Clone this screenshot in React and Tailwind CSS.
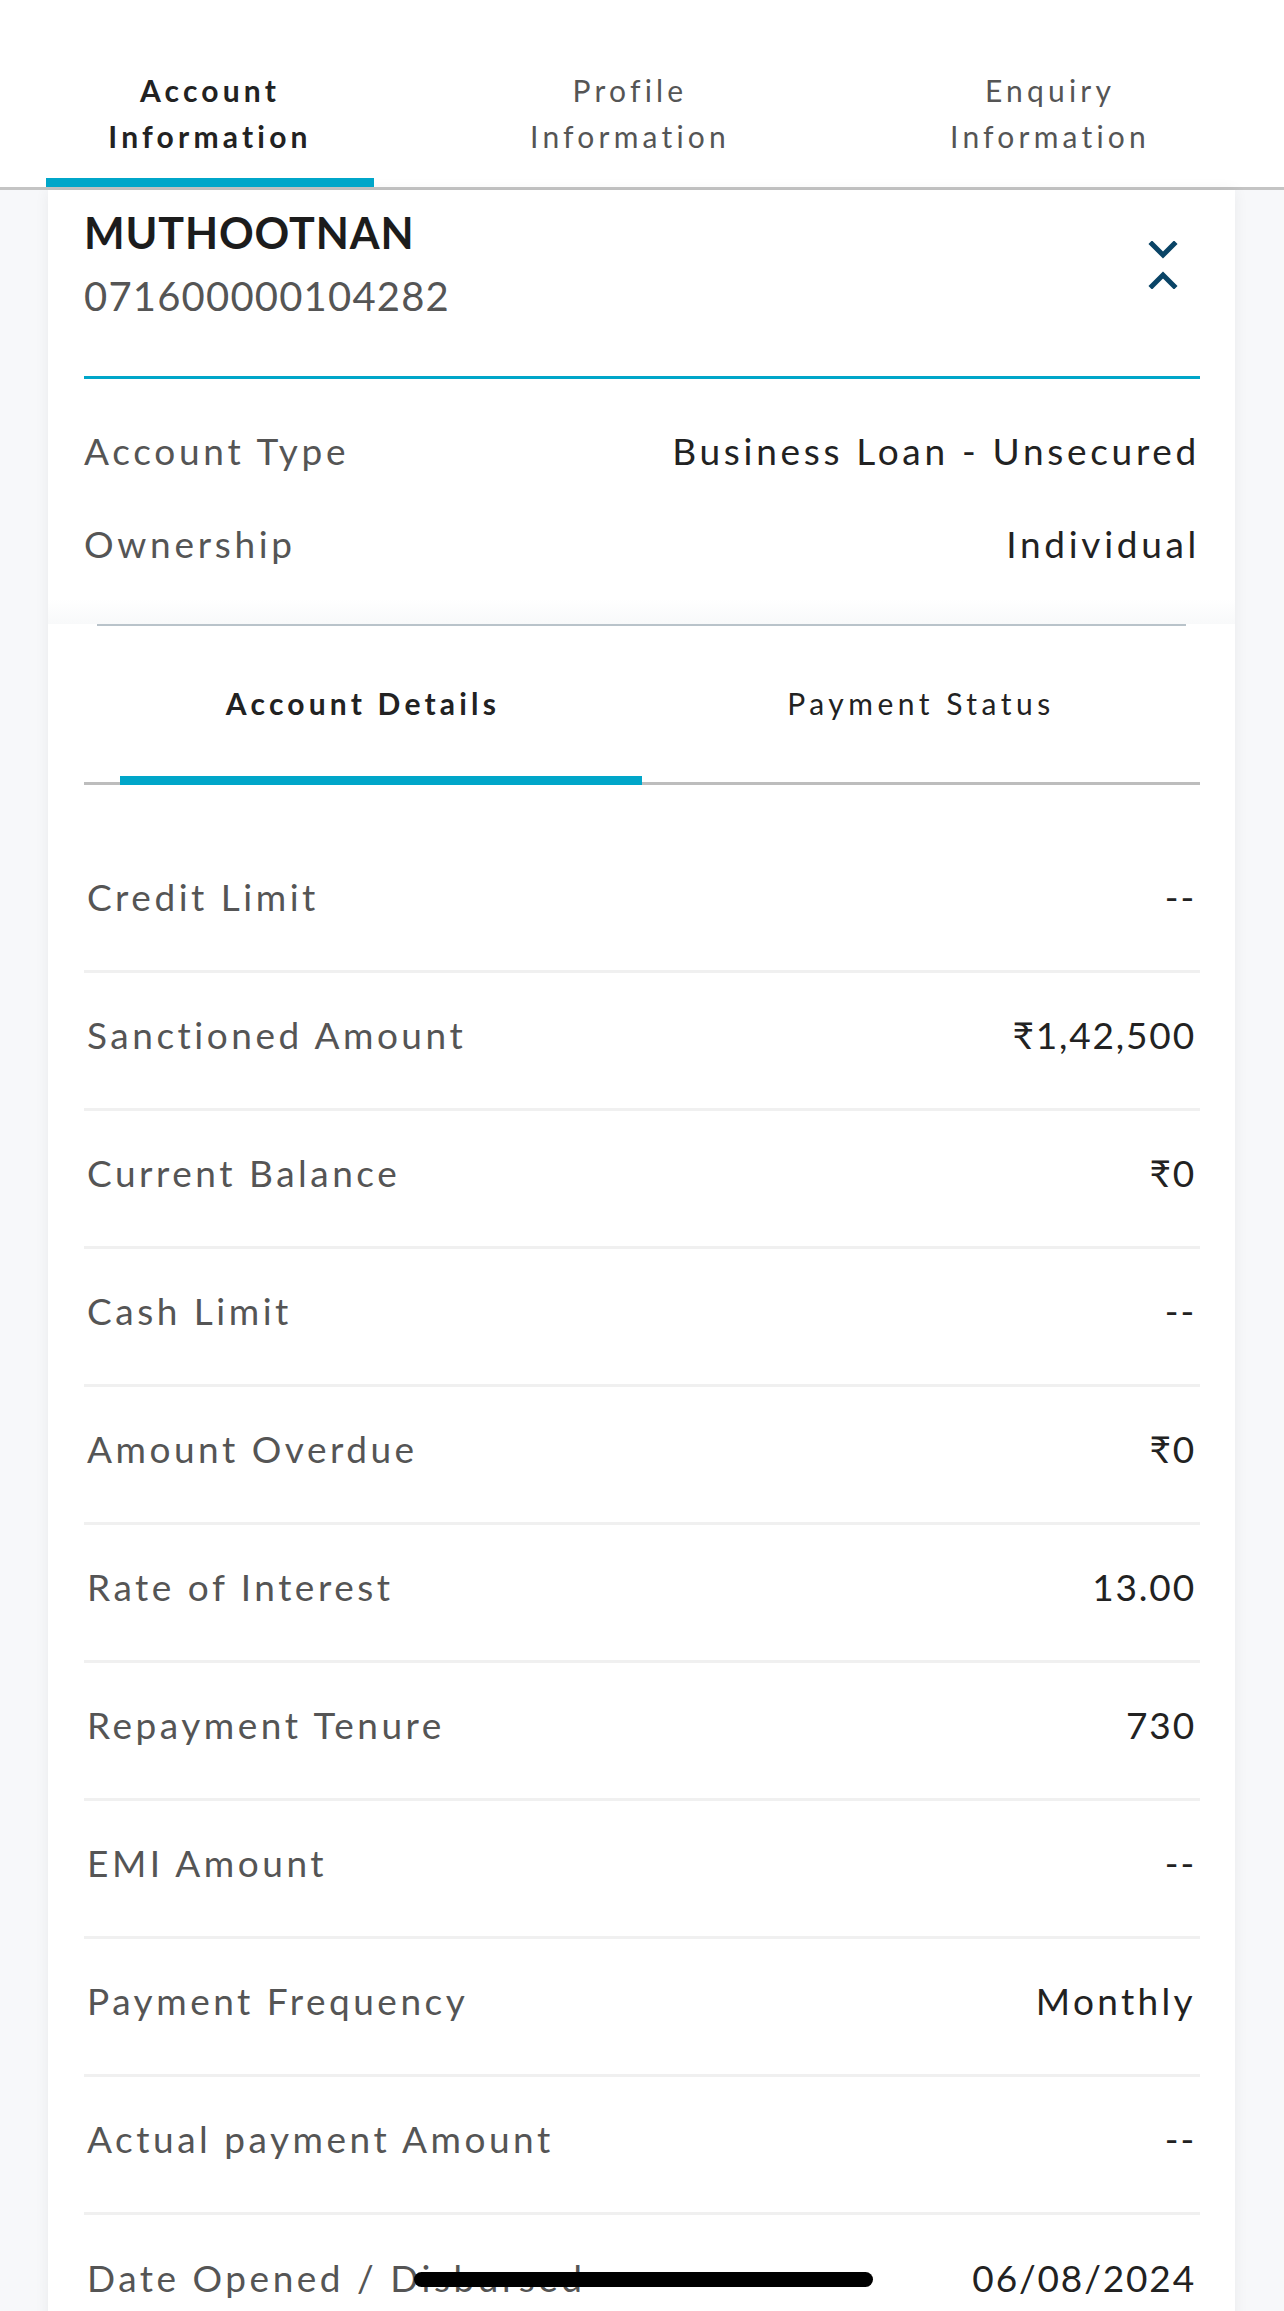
import React from 'react';

const rows = [
  ['Credit Limit', '--'],
  ['Sanctioned Amount', '₹1,42,500'],
  ['Current Balance', '₹0'],
  ['Cash Limit', '--'],
  ['Amount Overdue', '₹0'],
  ['Rate of Interest', '13.00'],
  ['Repayment Tenure', '730'],
  ['EMI Amount', '--'],
  ['Payment Frequency', 'Monthly'],
  ['Actual payment Amount', '--'],
  ['Date Opened / Disbursed', '06/08/2024'],
];

function Chevron({ up }) {
  return (
    <svg width="30" height="18" viewBox="0 0 30 18" fill="none">
      <path
        d={up ? 'M4 15 L15 4 L26 15' : 'M4 3 L15 14 L26 3'}
        stroke="#0a4466"
        strokeWidth="5"
        strokeLinecap="square"
      />
    </svg>
  );
}

function TopTab({ line1, active }) {
  return (
    <div className="w-[420px] flex flex-col items-center pt-[67px]">
      <div
        className={`text-center text-[30px] leading-[46px] tracking-[0.14em] ${
          active ? 'font-bold text-[#222]' : 'text-[#555]'
        }`}
      >
        <div>{line1}</div>
        <div>Information</div>
      </div>
      <div className={`mt-[19px] h-[9px] w-[328px] ${active ? 'bg-[#00a6c9]' : ''}`} />
    </div>
  );
}

export default function App() {
  return (
    <div
      className="relative w-[1284px] h-[2311px] overflow-hidden bg-[#f7f8fa]"
      style={{ fontFamily: 'Lato, "Noto Sans", "DejaVu Sans", sans-serif' }}
    >
      {/* top tabs */}
      <div className="bg-white border-b-[3px] border-[#c4c4c4] flex">
        <TopTab line1="Account" active />
        <TopTab line1="Profile" />
        <TopTab line1="Enquiry" />
      </div>

      {/* card */}
      <div className="ml-[48px] w-[1187px] bg-white shadow-[0_0_14px_rgba(0,0,0,0.06)]">
        <div className="px-[35px] pl-[36px]">
          <div className="flex justify-between items-start pt-[18px]">
            <div>
              <div className="text-[43px] leading-[50px] font-bold text-[#1c1c1c] tracking-[0.02em]">
                MUTHOOTNAN
              </div>
              <div className="mt-[13px] text-[40px] leading-[50px] text-[#555] tracking-[0.03em]">
                071600000104282
              </div>
            </div>
            <div className="flex flex-col items-center gap-[12px] mt-[33px] mr-[22px]">
              <Chevron />
              <Chevron up />
            </div>
          </div>
          <div className="mt-[55px] h-[3px] bg-[#00a6c9]" />

          <div className="mt-[47px] flex justify-between text-[37px] leading-[50px] tracking-[0.1em]">
            <span className="text-[#555]">Account Type</span>
            <span className="text-[#222]">Business Loan - Unsecured</span>
          </div>
          <div className="mt-[43px] flex justify-between text-[37px] leading-[50px] tracking-[0.1em]">
            <span className="text-[#555]">Ownership</span>
            <span className="text-[#222]">Individual</span>
          </div>
        </div>
        <div className="mt-[30px] h-[25px] bg-gradient-to-b from-white to-[#f8f9fa]" />
        <div className="mx-[49px] h-[2px] bg-[#b9c3ca]" />

        {/* sub tabs */}
        <div className="px-[35px] pl-[36px]">
          <div className="flex border-b-[3px] border-[#bdbdbd] pt-[57px]">
            <div className="flex-1 flex flex-col">
              <div className="text-center text-[30px] leading-[40px] font-bold text-[#222] tracking-[0.14em]">
                Account Details
              </div>
              <div className="mt-[53px] ml-[36px] h-[9px] -mb-[3px] bg-[#00a6c9]" />
            </div>
            <div className="flex-1 flex flex-col">
              <div className="text-center text-[30px] leading-[40px] text-[#222] tracking-[0.15em]">
                Payment Status
              </div>
            </div>
          </div>

          <div className="pt-[50px]">
            {rows.map(([label, value], i) => (
              <div
                key={label}
                className={`h-[138px] pb-[12px] flex items-center justify-between text-[37px] ${
                  i < rows.length - 1 ? 'border-b-[3px] border-[#f0f0f0]' : ''
                }`}
              >
                <span className="ml-[3px] text-[#555] tracking-[0.095em]">{label}</span>
                <span
                  className={`mr-[4px] text-[#222] ${
                    /[0-9-]/.test(value) ? 'tracking-[0.05em]' : 'tracking-[0.09em]'
                  }`}
                >
                  {value}
                </span>
              </div>
            ))}
          </div>
        </div>
      </div>

      {/* home indicator */}
      <div className="absolute left-[414px] top-[2272px] w-[459px] h-[15px] rounded-full bg-black" />
    </div>
  );
}
